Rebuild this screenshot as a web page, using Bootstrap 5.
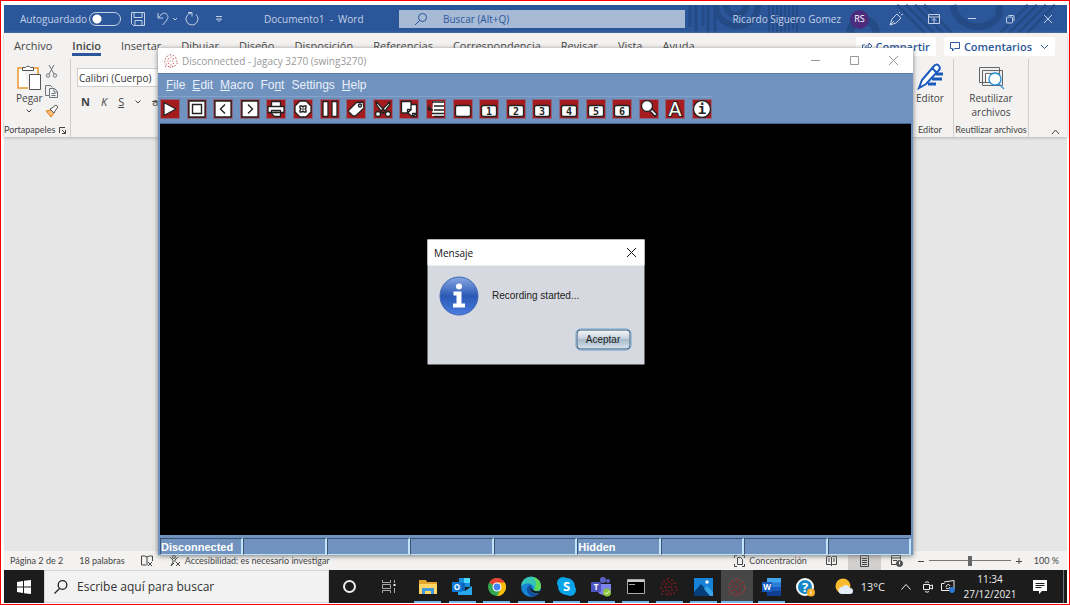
<!DOCTYPE html>
<html lang="es">
<head>
    <meta charset="UTF-8">
    <title>Documento1 - Word</title>
    <meta name="viewport" content="width=device-width, initial-scale=1">

    <link href="https://cdn.jsdelivr.net/npm/bootstrap@5.3.3/dist/css/bootstrap.min.css" rel="stylesheet">
    <style>
        body { height: 100vh; border: 1px solid #f00; padding: 4px 2px 1px 3px; background: #fff; overflow: hidden; font-family: "Open Sans", "Noto Sans", sans-serif; font-size: 11px; line-height: 14px; color: #444; }
        button { font: inherit; color: inherit; background: none; border: 0; padding: 0; }
        a { color: inherit; text-decoration: none; }
        svg { display: block; flex: none; overflow: visible; }
        .ln { fill: none; stroke: currentColor; }

        /* Word title bar */
        .word-title { height: 28px; background: #2b579a; color: #c3d0e5; font-size: 10px; }
        .title-art { right: 0; top: 0; }
        .title-left { width: 395px; padding-left: 16px; }
        .autosave-label { width: 69px; }
        .autosave { appearance: none; width: 32px; height: 14px; margin: 0 10px 0 0; border: 1px solid #c3d0e5; border-radius: 7px; background: radial-gradient(circle at 7px 6px, #fff 4px, transparent 5px); }
        .doc-name { margin-left: 42px; }
        .word-find { width: 286px; height: 18px; background: #a6b9d5; color: #2b579a; padding-left: 16px; }
        .word-find input { background: none; border: 0; padding: 0; width: 200px; outline: 0; color: #2b579a; }
        .word-find input::placeholder { color: #2b579a; opacity: 1; }
        .avatar { width: 19px; height: 19px; background: #4b2c7d; color: #fff; font-size: 9px; margin-left: 9px; }
        .title-btn { width: 38px; }

        /* ribbon */
        .ribbon { background: #f3f2f1; height: 104px; box-shadow: 0 1px 3px #b5b5b5; z-index: 1; }
        .ribbon-tabs { gap: 20px; padding-left: 10px; height: 26px; }
        .ribbon-tabs .current { font-weight: 600; border-bottom: 3px solid #2b579a; }
        .ribbon-tabs a { padding-top: 6px; height: 23px; white-space: nowrap; }
        .share-btn { height: 19px; background: #fff; color: #2b579a; font-weight: 600; border-radius: 2px; padding: 0 6px; gap: 4px; white-space: nowrap; font-size: 11px; }
        .ribbon-body { height: 78px; font-size: 10px; }
        .ribbon-group { border-right: 1px solid #cfcdcb; height: 78px; padding: 5px 0 1px; }
        .group-label { font-family: Lato, sans-serif; font-size: 9px; white-space: nowrap; line-height: 12px; }
        .clip-group { width: 67px; }
        .clip-small { padding: 1px 0 7px; }
        .font-group { padding: 9px 0 0 6px; }
        .font-select { appearance: none; width: 130px; height: 19px; border: 1px solid #d0cecc; border-radius: 0; background: #fff; color: #333; font-size: 10px; padding: 0 1px; }
        .font-row { gap: 11px; padding-left: 4px; font-size: 11px; }
        .reuse-group { width: 75px; }
        .editor-group { width: 47px; }
        .collapse-btn { width: 38px; padding: 0 0 2px 22px; }

        .word-page { background: #e6e6e6; }
        .word-status { height: 19px; background: #f3f2f1; font-family: Lato, sans-serif; font-size: 9px; padding-left: 6px; color: #444; }
        .word-status .views { width: 33px; height: 19px; }
        .zoom-range { appearance: none; width: 82px; height: 12px; margin: 0 5px; background: linear-gradient(#777, #777) center / 100% 1px no-repeat; }
        .zoom-range::-webkit-slider-thumb { appearance: none; width: 4px; height: 10px; background: #666; }

        /* Windows taskbar */
        .taskbar { height: 33px; background: #1c1c1c; color: #eee; }
        .start-btn { width: 40px; }
        .task-find { width: 285px; background: #f2f2f2; color: #222; border: 1px solid #d5d5d5; padding-left: 9px; }
        .task-find input { border: 0; background: none; outline: 0; padding: 0; width: 220px; font-size: 12px; margin-left: 9px; }
        .task-find input::placeholder { color: #333; opacity: 1; }
        .task-tool { width: 40px; }
        .task-apps { width: 411px; margin-left: 2px; }
        .task-apps .running { background: linear-gradient(#76b9ed, #76b9ed) center bottom / 27px 2px no-repeat; }
        .task-apps .front { background-size: 32px 2px, 32px 100%; background-image: linear-gradient(#76b9ed, #76b9ed), linear-gradient(#474747, #474747); background-position: center bottom; background-repeat: no-repeat; }
        .clock { width: 54px; font-size: 10px; line-height: 15px; }
        .tray { padding-right: 3px; }

        /* terminal window lying over Word */
        .jagacy { left: 158px; right: 157px; top: 48px; bottom: 50px; z-index: 5; background: #7092be; box-shadow: 0 1px 5px #777; font-family: "Liberation Sans", Arial, sans-serif; }
        .jagacy-title { height: 25px; background: #fff; color: #999; font-family: "Open Sans", "Noto Sans", sans-serif; font-size: 10px; padding-left: 6px; }
        .win-btn { width: 39px; color: #999; }
        .jagacy-menu { height: 23px; border-top: 1px solid #5a7cab; color: #e9f0fa; font-size: 12px; gap: 7px; padding-left: 8px; }
        .jagacy-tools { height: 27px; border-top: 1px solid #83a2cc; width: 554px; padding: 0 0 3px 2px; }
        .jagacy-tools button { background: #a51b1e; outline: 1px solid #8b6680; outline-offset: -1px; }
        .tool { width: 20px; height: 20px; }
        .tool .w { fill: #fff; stroke: #222; stroke-width: 1.3; stroke-linejoin: round; }
        .tool .k { fill: none; stroke: #222; stroke-width: 1.4; }
        .tool text { font: bold 10px "DejaVu Sans Mono", monospace; fill: #222; text-anchor: middle; }
        .tool .big-a { font: 19px "DejaVu Sans", sans-serif; fill: #fff; stroke: #222; stroke-width: 2; paint-order: stroke; }
        .tool .big-i { font-size: 14px; }
        .screen { background: #000; margin: 0 2px; border-top: 1px solid #45648f; }
        .jagacy-status { height: 20px; padding: 3px 2px 0; color: #fff; font-size: 11px; line-height: 16px; font-weight: bold; }
        .jagacy-status div { flex: 1 1 0; border: 1px solid #bfe4fa; border-top-color: #3c5373; border-left: 1px solid #3c5373; border-right-width: 2px; }

        .msg-box { width: 217px; background: #d6d9df; color: #222; }
        .msg-title { height: 26px; background: #fff; font-family: "Open Sans", "Noto Sans", sans-serif; font-size: 10px; padding: 0 8px 0 7px; color: #111; }
        .msg-body { height: 61px; padding: 0 12px; gap: 14px; font-size: 10px; }
        .msg-foot { height: 38px; padding: 3px 14px 0 0; }
        .ok-btn { width: 54px; height: 20px; border: 1px solid #3c596f; border-radius: 4px; outline: 1px solid #73a4d1; font-size: 10px; background: linear-gradient(#f4f6f8, #c5d1dc 45%, #a7bac9 50%, #d5e2ec); }
    </style>
</head>
<body class="d-flex flex-column">

<!-- Word -->
<header class="word-title d-flex align-items-center position-relative">
    <svg class="title-art position-absolute" width="382" height="28" viewBox="0 0 382 28" fill="none" stroke="#244b86">
        <path stroke-width="3" d="M5 0v22M11 0v28M18 0v21M23 0v28M30 0v28"/>
        <path stroke-width="2" d="M84 0v28M88 0v28M92 0v28M96 0v28M100 0v28M104 0v28M108 0v24M112 0v28"/>
        <path stroke-width="6" d="M31 0a20 20 0 0 0 42 0M41 0a10 10 0 0 0 20 0"/>
        <circle cx="178" cy="28" r="13" stroke-width="8"/>
        <path stroke-width="3" d="M212 0l28 28M221 0l28 28M230 0l28 28M239 0l28 28M315 28l28-28M324 28l28-28M333 28l28-28M342 28l28-28"/>
        <path stroke-width="7" d="M268 0a25 25 0 0 0 46 10V0"/>
    </svg>
    <div class="title-left d-flex align-items-center position-relative">
        <label class="autosave-label" for="autosave">Autoguardado</label>
        <input type="checkbox" role="switch" id="autosave" class="autosave">
        <button aria-label="Guardar"><svg class="ln" width="14" height="14"><path d="M.5.5h13v13h-11l-2-2zM3 .5v5h8v-5M4 13.500v-5h7v5"/></svg></button>
        <button class="ms-2 ps-1" aria-label="Deshacer"><svg class="ln" width="20" height="14"><path d="M1 1v5h5M1.500 5.500C5 1 8 0 10 2.500s1 5-4.500 10.500M16 6l2 2 2-2"/></svg></button>
        <button class="ms-2" aria-label="Rehacer"><svg class="ln" width="15" height="14"><path d="M3 .5h4v4M6.500 1A6 6 0 1 0 11 2.500"/></svg></button>
        <button class="ms-3" aria-label="Personalizar"><svg class="ln" width="6" height="6"><path d="M0 .5h6M.5 3L3 5.500 5.500 3z"/></svg></button>
        <span class="doc-name">Documento1 &nbsp;- &nbsp;Word</span>
    </div>
    <div class="word-find d-flex align-items-center position-relative">
        <svg class="ln me-3" width="12" height="12"><circle cx="7.500" cy="4.500" r="4"/><path d="M4.500 7.500L0 12"/></svg>
        <input type="text" placeholder="Buscar (Alt+Q)" aria-label="Buscar">
    </div>
    <div class="d-flex align-items-center ms-auto position-relative">
        <span>Ricardo Siguero Gomez</span>
        <span class="avatar rounded-circle d-flex align-items-center justify-content-center me-2">RS</span>
        <button class="title-btn d-flex justify-content-center" aria-label="Novedades"><svg class="ln" width="14" height="14"><path d="M1 13l2-6 5-5 4 4-5 5zM1 13l4-4M10 1l1-1M12 3l2-1"/></svg></button>
        <button class="title-btn d-flex justify-content-center" aria-label="Opciones de cinta"><svg class="ln" width="12" height="10"><path d="M.5.5h11v9H.5zM.5 3h11M6 9V4.500M4 6.500l2-2 2 2"/></svg></button>
        <button class="title-btn d-flex justify-content-center" aria-label="Minimizar"><svg class="ln" width="8" height="8"><path d="M0 3.500h8"/></svg></button>
        <button class="title-btn d-flex justify-content-center" aria-label="Restaurar"><svg class="ln" width="9" height="9"><rect x=".5" y="2" width="6" height="6" rx="1"/><path d="M2.500 .500H7a1 1 0 0 1 1 1V6"/></svg></button>
        <button class="title-btn d-flex justify-content-center" aria-label="Cerrar"><svg class="ln" width="8" height="8"><path d="M0 0l8 8M8 0L0 8"/></svg></button>
    </div>
</header>

<section class="ribbon position-relative">
    <nav class="ribbon-tabs d-flex">
        <a href="#">Archivo</a><a href="#" class="current">Inicio</a><a href="#">Insertar</a><a href="#">Dibujar</a><a href="#">Diseño</a><a href="#">Disposición</a><a href="#">Referencias</a><a href="#">Correspondencia</a><a href="#">Revisar</a><a href="#">Vista</a><a href="#">Ayuda</a>
        <div class="ms-auto d-flex gap-2 pt-1 pe-2 me-1">
            <button class="share-btn d-flex align-items-center"><svg class="ln" width="10" height="10"><path d="M3 3H.5v6.500h7V7M3 7c0-3 2-4 4-4V1l3 3-3 3V5C5 5 4 6 3 7z"/></svg>Compartir</button>
            <button class="share-btn d-flex align-items-center"><svg class="ln" width="10" height="10"><path d="M.5.500h9v6H4.500l-2 2.500V6.500h-2z"/></svg>Comentarios<svg class="ln ms-1" width="9" height="6"><path d="M1 1l3.500 3.500L8 1"/></svg></button>
        </div>
    </nav>
    <div class="ribbon-body d-flex">
        <div class="ribbon-group clip-group d-flex flex-column">
            <div class="d-flex flex-grow-1 justify-content-between pe-2 me-1">
                <button class="d-flex flex-column align-items-center ps-2 ms-1"><svg width="24" height="27" fill="#fff" stroke="#555"><path stroke="#e9962f" stroke-width="1.500" d="M7 4H1v20h10M16 4h5v6"/><path d="M5.500 6.500v-3h3a3 3 0 0 1 5 0h3v3zM12.500 10.500h11v15h-11z"/></svg>Pegar<svg class="ln mt-1" width="6" height="4"><path d="M.5.500L3 3 5.500.500"/></svg></button>
                <div class="clip-small d-flex flex-column justify-content-between">
                    <button aria-label="Cortar"><svg width="13" height="13" class="ln text-secondary"><path d="M4 0l5 9M9 0L4 9"/><circle cx="3" cy="10.500" r="1.700"/><circle cx="10" cy="10.500" r="1.700"/></svg></button>
                    <button aria-label="Copiar"><svg width="13" height="13" class="ln text-secondary"><path d="M4 10.500H.500V.500h5l2 2M4.500 3.500h5l3 3v6h-8zM9 3.500V7h3M6.500 8.500h4M6.500 10.500h4"/></svg></button>
                    <button aria-label="Copiar formato"><svg width="13" height="12"><path d="M1 6l5-1 3 3-3 4z" fill="#f6bd77" stroke="#e47b1d"/><path d="M5 4l4 4 1-2 3-4-2-2-4 3z" fill="#fff" stroke="#555"/></svg></button>
                </div>
            </div>
            <div class="group-label d-flex justify-content-between align-items-center ps-0 pe-1"><span>Portapapeles</span><svg class="ln" width="7" height="7"><path d="M.5 6V.500H6M3 3l3.500 3.500M6.500 3v3.500H3"/></svg></div>
        </div>
        <div class="font-group flex-grow-1">
            <select class="font-select d-block" aria-label="Fuente"><option>Calibri (Cuerpo)</option></select>
            <div class="font-row d-flex mt-2">
                <button class="fw-bold">N</button><button class="fst-italic">K</button><button class="text-decoration-underline">S</button>
                <svg class="ln align-self-center" width="6" height="4"><path d="M.5.500L3 3 5.500.500"/></svg><button class="text-decoration-line-through">ab</button>
            </div>
        </div>
        <div class="ribbon-group editor-group d-flex flex-column align-items-center">
            <button class="d-flex flex-column align-items-center"><svg width="25" height="27"><path d="M1 24l3-8L16 2q3-3 5 0t-1 5L8 20z" fill="#fff" stroke="#185abd" stroke-width="2"/><path d="M14 4l5 5" stroke="#185abd" stroke-width="2"/><path d="M18 10h7M14 15h10M10 20h8" stroke="#185abd" stroke-width="3"/></svg>Editor</button>
            <span class="group-label mt-auto">Editor</span>
        </div>
        <div class="ribbon-group reuse-group d-flex flex-column align-items-center">
            <button class="text-center"><svg class="mx-auto" width="26" height="27" fill="#eee" stroke="#666"><path d="M1.500 3.500h20v15h-20zM4.500 6.500h20v15h-20z"/><path d="M7.500 9.500h14v9h-14z" fill="#fff"/><g fill="#fff" stroke="#2790d8" stroke-width="1.300"><circle cx="17" cy="15" r="6"/><path d="M21 20l5 5"/></g></svg>Reutilizar<br>archivos</button>
            <span class="group-label mt-auto">Reutilizar archivos</span>
        </div>
        <button class="collapse-btn align-self-end" aria-label="Contraer"><svg class="ln" width="9" height="6"><path d="M1 5l3.500-4L8 5"/></svg></button>
    </div>
</section>

<main class="word-page flex-grow-1"></main>

<footer class="word-status d-flex align-items-center">
    <span>Página 2 de 2</span>
    <span class="ms-3">18 palabras</span>
    <svg class="ln ms-3" width="12" height="12"><path d="M6 2Q4 .500.500 1v9h5M6 2q2-1.500 5.500-1v5M6 2v8M7 7l4 4M11 7l-4 4"/></svg>
    <svg class="ln ms-3 me-1" width="12" height="12"><circle cx="5" cy="2" r="1.500"/><path d="M1 2l3 3v2l-2 4 3-3M9 2L6 5v2M7 7l4 4M11 7l-4 4"/></svg>
    <span>Accesibilidad: es necesario investigar</span>
    <div class="ms-auto d-flex align-items-center">
        <svg class="ln me-1" width="11" height="12"><path d="M.5 3V.500H3M8 .500h2.500V3M.5 9v2.500H3M8 11.500h2.500V9M3.500 2.500h3l2 2v5h-5z"/></svg>
        <span class="me-2">Concentración</span>
        <button class="views d-flex align-items-center justify-content-center" aria-label="Modo de lectura"><svg class="ln" width="11" height="10"><path d="M5.500 1v9M.5.500h4l1 1 1-1h4v8h-4l-1 1-1-1h-4zM2 3h2M2 5h2M7 3h2M7 5h2"/></svg></button>
        <button class="views d-flex align-items-center justify-content-center" style="background: #d2d0ce" aria-label="Diseño de impresión"><svg class="ln" width="9" height="12"><path d="M.5.500h8v11h-8zM2 3.500h5M2 5.500h5M2 7.500h5M2 9.500h5"/></svg></button>
        <button class="views d-flex align-items-center justify-content-center" aria-label="Diseño web"><svg class="ln" width="12" height="12"><path d="M6 9.500H.500v-9h9v4M.5 3h9M2 5.500h4"/><circle cx="8.500" cy="8.500" r="3" fill="#555"/><path stroke="#fff" d="M8.500 6.500v3"/></svg></button>
        <svg class="ln ms-1" width="6" height="6"><path d="M0 3.500h6"/></svg>
        <input type="range" class="zoom-range" aria-label="Zoom">
        <svg class="ln" width="6" height="6"><path d="M0 3.500h6M3 0v6"/></svg>
        <span class="ms-2 ps-1 pe-1 me-1">100 %</span>
    </div>
</footer>

<!-- Windows taskbar -->
<nav class="taskbar d-flex align-items-stretch">
    <button class="start-btn d-flex align-items-center justify-content-center" aria-label="Inicio"><svg width="14" height="14" fill="#fff"><path d="M0 2l6-1v5.500H0zM7 .800L14 0v6.500H7zM0 7.500h6V13l-6-1zM7 7.500h7V14l-7-.800z"/></svg></button>
    <div class="task-find d-flex align-items-center">
        <svg class="ln" width="14" height="14" stroke-width="1.300"><circle cx="8.500" cy="5" r="4.300"/><path d="M5.500 8.500L.5 13.500"/></svg>
        <input type="text" placeholder="Escribe aquí para buscar" aria-label="Buscar en Windows">
    </div>
    <button class="task-tool d-flex align-items-center justify-content-center" aria-label="Cortana"><svg class="ln" width="13" height="13" stroke-width="2"><circle cx="6.500" cy="6.500" r="5.500"/></svg></button>
    <button class="task-tool d-flex align-items-center justify-content-center" aria-label="Vista de tareas"><svg class="ln" width="14" height="13"><g stroke="#aaa"><path d="M.5 0v2.500h8V0M.5 4.500h8v4h-8zM.5 13v-2.500h8V13M12.500 0v3M12.500 8v5"/></g><path stroke-width="2" d="M12.500 4v2"/></svg></button>
    <div class="task-apps d-flex">
        <button class="running flex-fill d-flex align-items-center justify-content-center" aria-label="Explorador"><svg width="18" height="16"><path fill="#e6a52c" d="M0 1h7l1 2h10v12H0z"/><path fill="#ffd767" d="M0 5h18v10H0z"/><path fill="#3f9ae0" d="M3 15V9h12v6h-3v-3H6v3z"/></svg></button>
        <button class="running flex-fill d-flex align-items-center justify-content-center" aria-label="Outlook"><svg width="20" height="18"><path fill="#1490df" d="M7 0h11v9H7z"/><path fill="#50d9ff" d="M12 0h6v5h-6z"/><path fill="#28a8ea" d="M6 9l7 4 7-5v9H6z"/><path fill="#0364b8" d="M6 5h7v8H6z"/><rect fill="#0f78d4" y="4" width="10" height="10"/><text x="5" y="12" font-size="8" font-weight="bold" fill="#fff" text-anchor="middle">O</text></svg></button>
        <button class="running flex-fill d-flex align-items-center justify-content-center" aria-label="Chrome"><svg width="18" height="18"><circle cx="9" cy="9" r="9" fill="#34a853"/><path fill="#ea4335" d="M9 9L1.200 4.500a9 9 0 0 1 15.600 0z"/><path fill="#fbbc05" d="M9 9V4.500h7.800A9 9 0 0 1 9 18l4-7z"/><circle cx="9" cy="9" r="4.500" fill="#fff"/><circle cx="9" cy="9" r="3.400" fill="#4285f4"/></svg></button>
        <button class="running flex-fill d-flex align-items-center justify-content-center" aria-label="Edge"><svg width="20" height="20"><circle cx="10" cy="10" r="10" fill="#1683d4"/><path fill="#36c5b5" d="M0 9a10 10 0 0 1 20 1q0 4-5 4c-3 0-2-2-2-4Q8 3 0 9z"/><path fill="#62d854" d="M12 0q8 2 8 10-1 4-5 4-3-1-1-3 3-5-2-11z"/><path fill="#134e9d" d="M10 8c-5 1-6 7 0 11 4 1 7-1 8-3-5 2-10-1-8-5z"/><path fill="#1c1c1c" d="M10 10c1 4 5 5 9 4l-1 2c-5 1-10-1-8-6z"/></svg></button>
        <button class="running flex-fill d-flex align-items-center justify-content-center" aria-label="Skype"><svg width="19" height="19" fill="#0aa5e9"><circle cx="6" cy="6" r="6"/><circle cx="13" cy="13" r="6"/><circle cx="9.500" cy="9.500" r="8.500"/><text x="9.500" y="14" font-size="13" font-weight="bold" fill="#fff" text-anchor="middle">S</text></svg></button>
        <button class="running flex-fill d-flex align-items-center justify-content-center" aria-label="Teams"><svg width="20" height="20" fill="#5b62c4"><circle cx="12" cy="3" r="3"/><circle cx="17" cy="4" r="2"/><path fill="#7b83eb" d="M6 7h14v6q-1 4-5 3l-3 2q-5-1-6-5z"/><rect fill="#4b53bc" y="5" width="10" height="10" rx="1"/><text x="5" y="13" font-size="8" font-weight="bold" fill="#fff" text-anchor="middle">T</text><circle cx="16" cy="15.500" r="4" fill="#8bc53f"/><path d="M14 15.500l1.500 1.500 3-3" fill="none" stroke="#fff"/></svg></button>
        <button class="running flex-fill d-flex align-items-center justify-content-center" aria-label="Consola"><svg width="18" height="15"><path d="M.5.500h17v14H.500z" stroke="#aaa"/><path fill="#ccc" d="M1 1h16v2H1z"/><path stroke="#aaa" d="M2 5.500h6"/></svg></button>
        <button class="running flex-fill d-flex align-items-center justify-content-center" aria-label="Jagacy"><svg width="18" height="18"><path id="dots" fill="none" stroke="#b5181c" stroke-width="1.600" stroke-linecap="round" d="M8 1h0M12 2h0M4 3h0M9 4h0M2 6h0M6 6h0M12 6h0M15 5h0M1 10h0M5 9h0M8 9h0M11 9h0M16 9h0M3 13h0M6 12h0M12 12h0M17 12h0M2 16h0M6 16h0M9 14h0M11 16h0M14 15h0M8 17h0"/></svg></button>
        <button class="running flex-fill d-flex align-items-center justify-content-center" aria-label="Fotos"><svg width="19" height="18"><path fill="#1683d8" d="M0 0h19v18H0z"/><path fill="#063e78" d="M0 14l7-8 10 12H0z"/><path fill="#38a6e8" d="M10 11l3-3 6 6v4h-3z"/><circle cx="13" cy="4" r="1.700" fill="#fff"/></svg></button>
        <button class="running front flex-fill d-flex align-items-center justify-content-center" aria-label="Jagacy 3270"><svg width="18" height="18"><circle cx="9" cy="9" r="8" fill="none" stroke="#6e6060" stroke-dasharray="2 1"/><use href="#dots"/></svg></button>
        <button class="running flex-fill d-flex align-items-center justify-content-center" aria-label="Word"><svg width="19" height="18"><path fill="#41a5ee" d="M5 0h14v5H5z"/><path fill="#2b7cd3" d="M5 4.500h14V9H5z"/><path fill="#185abd" d="M5 9h14v4.500H5z"/><path fill="#103f91" d="M5 13.500h14V18H5z"/><rect fill="#185abd" y="4" width="10" height="10"/><text x="5" y="12" font-size="8" font-weight="bold" fill="#fff" text-anchor="middle">W</text></svg></button>
        <button class="flex-fill d-flex align-items-center justify-content-center" aria-label="Ayuda"><svg width="18" height="18"><circle cx="9" cy="9" r="8" fill="#1787c8" stroke="#fff" stroke-width="2"/><text x="9" y="14" font-size="13" font-weight="bold" fill="#fff" text-anchor="middle">?</text><circle cx="15" cy="14.500" r="4" fill="#f5ae26"/><path d="M15 13.500v3M15 12v1" stroke="#fff"/></svg></button>
    </div>
    <div class="tray ms-auto d-flex align-items-center">
        <a href="#" class="d-flex align-items-center"><svg width="18" height="16"><circle cx="8" cy="7" r="7.500" fill="#f9ba2e"/><path fill="#e3ecf7" d="M7 15a3.500 3.500 0 0 1 0-7 4.500 4.500 0 0 1 8 1 3 3 0 0 1 0 6z"/></svg><span class="ms-2">13°C</span></a>
        <button class="ms-3" aria-label="Iconos ocultos"><svg class="ln" width="10" height="6"><path d="M.5 5.500l4.500-5 4.500 5"/></svg></button>
        <button class="ms-2 ps-1" aria-label="Reunión"><svg class="ln" width="10" height="12"><path d="M.5 3.500h6v5h-6zM6.500 5l3-1v4l-3-1M2 1.500q2-1.500 4 0M2 10.500q2 1.500 4 0"/></svg></button>
        <button class="ms-2" aria-label="Red"><svg class="ln" width="14" height="13"><path d="M3 2L13 .500V9M.5 3.500h3M.5 3.500v7h8M5 7c0-3 4-3 4-1M9 7c0 2-3 2-4 1"/><circle cx="11" cy="10" r="2.500" fill="#2b7bd5" stroke="#2b7bd5"/></svg></button>
        <button class="clock ms-2">11:34<br>27/12/2021</button>
        <button class="ms-3" aria-label="Notificaciones"><svg width="14" height="14"><path fill="#fff" d="M0 0h14v11H9l-3 3v-3H0z"/><path stroke="#1c1c1c" d="M2.500 3.500h9M2.500 5.500h9M2.500 7.500h6"/></svg></button>
        <div class="ms-3 border-start border-secondary align-self-stretch"></div>
    </div>
</nav>

<!-- Jagacy terminal -->
<section class="jagacy position-absolute d-flex flex-column">
    <div class="jagacy-title d-flex align-items-center">
        <svg width="14" height="14" viewBox="0 0 18 18" opacity=".7"><circle cx="9" cy="9" r="8" fill="none" stroke="#bbb" stroke-dasharray="2 1"/><use href="#dots"/></svg>
        <span class="ms-1">Disconnected - Jagacy 3270 (swing3270)</span>
        <div class="ms-auto d-flex">
            <button class="win-btn d-flex justify-content-center" aria-label="Minimizar"><svg class="ln" width="9" height="9"><path d="M0 4.500h9"/></svg></button>
            <button class="win-btn d-flex justify-content-center" aria-label="Maximizar"><svg class="ln" width="9" height="9"><path d="M.5.500h8v8h-8z"/></svg></button>
            <button class="win-btn d-flex justify-content-center" aria-label="Cerrar"><svg class="ln" width="9" height="9"><path d="M0 0l9 9M9 0L0 9"/></svg></button>
        </div>
    </div>
    <nav class="jagacy-menu d-flex align-items-center">
        <a href="#"><u>F</u>ile</a><a href="#"><u>E</u>dit</a><a href="#"><u>M</u>acro</a><a href="#">Fo<u>n</u>t</a><a href="#">Settings</a><a href="#"><u>H</u>elp</a>
    </nav>
    <div class="jagacy-tools d-flex align-items-center justify-content-between">
        <button aria-label="Run"><svg class="tool"><path class="w" d="M4 3.500L16 10 4 16.500z"/></svg></button>
        <button aria-label="Stop"><svg class="tool"><path class="w" d="M2 2h16v16H2z"/><path class="k" d="M5.500 5.500h9v9h-9z"/></svg></button>
        <button aria-label="Back"><svg class="tool"><path class="w" d="M2 2h16v16H2z"/><path class="k" d="M12 5.500L7.500 10l4.500 4.500"/></svg></button>
        <button aria-label="Forward"><svg class="tool"><path class="w" d="M2 2h16v16H2z"/><path class="k" d="M8 5.500l4.500 4.500L8 14.500"/></svg></button>
        <button aria-label="Print"><svg class="tool"><path class="w" d="M5.500 2.500h9v5h-9zM2 7.500h16v6H2zM5.500 11.500h9v6h-6l-3-3z"/><path class="k" d="M8 13.500h4"/></svg></button>
        <button aria-label="Clear"><svg class="tool"><path class="w" d="M7 2h6l5 5v6l-5 5H7l-5-5V7z"/><path class="k" stroke-linejoin="round" d="M7 7h2l1 1 1-1h2v2l-1 1 1 1v2h-2l-1-1-1 1H7v-2l1-1-1-1z"/><path class="k" d="M9.300 10h1.400"/></svg></button>
        <button aria-label="Pause"><svg class="tool"><path class="w" d="M3 2.500h5v15H3zM12 2.500h5v15h-5z"/></svg></button>
        <button aria-label="Tag"><svg class="tool"><path class="w" d="M2 12l8.500-8.500L17 3l1 6-8.500 8H7z"/><circle class="k" cx="14" cy="6.500" r="1.500"/></svg></button>
        <button aria-label="Cut"><svg class="tool"><path class="w" d="M3 2.500l9 9.500-2 2.500L3.500 6zM17 2.500L8 12l2 2.500L16.500 6z"/><circle class="w" cx="5" cy="15" r="2.500"/><circle class="w" cx="15" cy="15" r="2.500"/></svg></button>
        <button aria-label="Copy"><svg class="tool"><path class="w" d="M9 5.500h8.500v12H13L9 14z"/><path class="w" d="M2.500 2.500H12v8L8.500 14h-6z"/><path class="w" d="M8.500 14v-3.500H12zM13.500 17.500v-3h4z"/></svg></button>
        <button aria-label="Lines"><svg class="tool"><path fill="#fff" d="M7 2h11v15H6z"/><path class="k" d="M6 3h12M8 7h10M8 11h10M6 14.500h12M8 17.500h10M3 6v5h4M1 9l2 2 2-2"/></svg></button>
        <button aria-label="Key"><svg class="tool"><rect class="w" x="2.500" y="6.500" width="15" height="11" rx="2"/></svg></button>
        <button><svg class="tool"><rect class="w" x="2.500" y="6.500" width="15" height="11" rx="2"/><text x="10" y="16">1</text></svg></button>
        <button><svg class="tool"><rect class="w" x="2.500" y="6.500" width="15" height="11" rx="2"/><text x="10" y="16">2</text></svg></button>
        <button><svg class="tool"><rect class="w" x="2.500" y="6.500" width="15" height="11" rx="2"/><text x="10" y="16">3</text></svg></button>
        <button><svg class="tool"><rect class="w" x="2.500" y="6.500" width="15" height="11" rx="2"/><text x="10" y="16">4</text></svg></button>
        <button><svg class="tool"><rect class="w" x="2.500" y="6.500" width="15" height="11" rx="2"/><text x="10" y="16">5</text></svg></button>
        <button><svg class="tool"><rect class="w" x="2.500" y="6.500" width="15" height="11" rx="2"/><text x="10" y="16">6</text></svg></button>
        <button aria-label="Find"><svg class="tool"><path class="w" d="M11 12l2-2 5 5-2 2.500z"/><circle class="w" cx="8" cy="7" r="5.500"/></svg></button>
        <button><svg class="tool"><text class="big-a" x="10" y="17">A</text></svg></button>
        <button><svg class="tool"><circle class="w" cx="10" cy="10" r="8.500"/><text class="big-i" x="10" y="15">i</text></svg></button>
    </div>
    <div class="screen flex-grow-1"></div>
    <div class="jagacy-status d-flex">
        <div>Disconnected</div><div></div><div></div><div></div><div></div><div>Hidden</div><div></div><div></div><div></div>
    </div>

    <div class="msg-box position-absolute top-50 start-50 translate-middle" role="dialog" aria-labelledby="msgTitle">
        <div class="msg-title d-flex align-items-center justify-content-between">
            <span id="msgTitle">Mensaje</span>
            <button aria-label="Cerrar"><svg class="ln" width="10" height="10"><path d="M.5.500l9 9M9.500.500l-9 9"/></svg></button>
        </div>
        <div class="msg-body d-flex align-items-center">
            <svg width="39" height="39">
                <defs><linearGradient id="infoBlue" x2="0" y2="1"><stop stop-color="#8aa8e3"/><stop offset=".5" stop-color="#2a59b5"/><stop offset="1" stop-color="#4a7de0"/></linearGradient></defs>
                <circle cx="19.500" cy="19.500" r="19" fill="url(#infoBlue)" stroke="#3c66b5"/>
                <g fill="#fff"><circle cx="19.500" cy="10" r="3"/><path d="M14 15h8v12h3.500v4h-12v-4H17v-8h-3z"/></g>
            </svg>
            <span>Recording started...</span>
        </div>
        <div class="msg-foot d-flex justify-content-end align-items-start"><button class="ok-btn">Aceptar</button></div>
    </div>
</section>

<script src="https://cdn.jsdelivr.net/npm/bootstrap@5.3.3/dist/js/bootstrap.bundle.min.js"></script>
</body>
</html>
